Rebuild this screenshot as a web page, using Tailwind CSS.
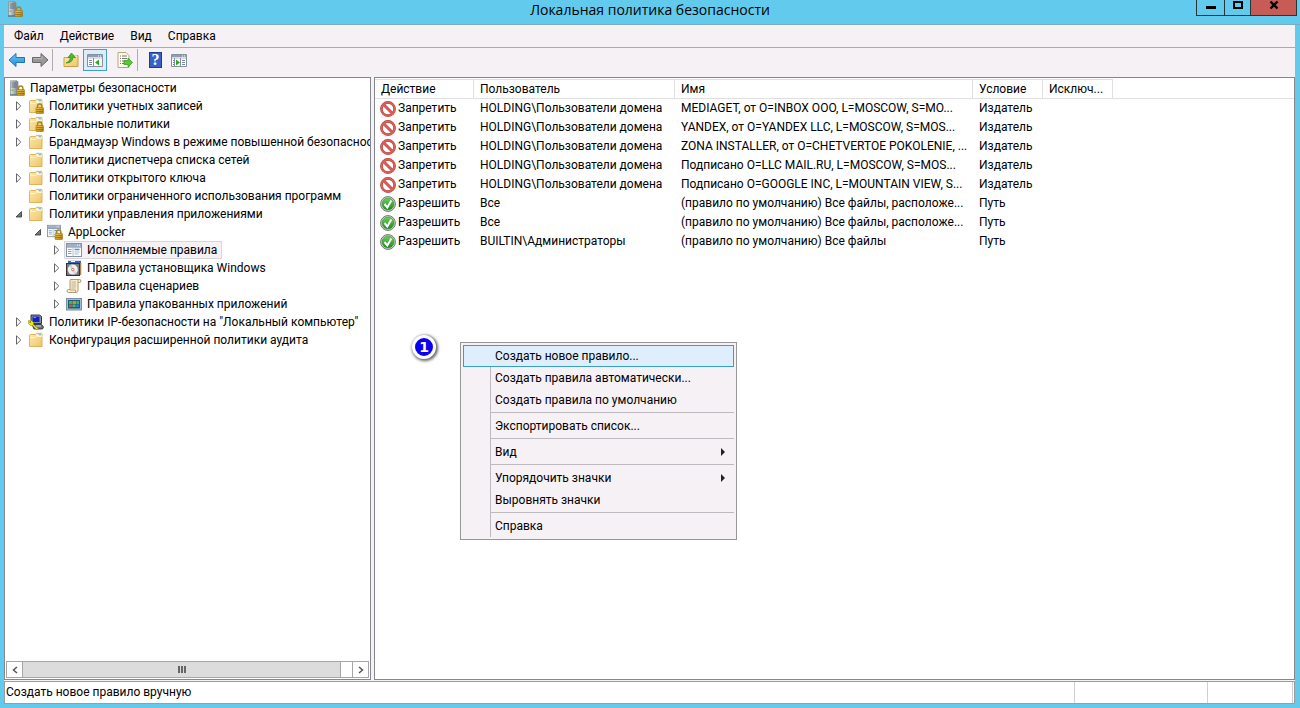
<!DOCTYPE html>
<html lang="ru">
<head>
<meta charset="utf-8">
<meta name="viewport" content="width=device-width, initial-scale=1">
<title>Локальная политика безопасности</title>
<script src="https://cdn.jsdelivr.net/npm/@tailwindcss/browser@4"></script>
</head>
<body class="flex h-screen flex-col overflow-hidden bg-[#62caed] font-['Roboto','Noto_Sans',sans-serif] text-xs text-black">
<svg class="absolute size-0" aria-hidden="true">
  <defs>
    <linearGradient id="gf" x1="0" y1="0" x2="1" y2="1"><stop offset="0" stop-color="#fdeab0"/><stop offset="1" stop-color="#efc566"/></linearGradient>
    <linearGradient id="gl" x1="0" y1="0" x2="1" y2="1"><stop offset="0" stop-color="#f5cf50"/><stop offset="1" stop-color="#b07a0c"/></linearGradient>
    <linearGradient id="gs" x1="0" y1="0" x2="1" y2="0"><stop offset="0" stop-color="#dfe5ea"/><stop offset="1" stop-color="#77828c"/></linearGradient>
    <linearGradient id="gg" x1="0" y1="0" x2="0" y2="1"><stop offset="0" stop-color="#6fd05a"/><stop offset="1" stop-color="#1d8a1c"/></linearGradient>
    <linearGradient id="gb" x1="0" y1="0" x2="0" y2="1"><stop offset="0" stop-color="#6cc4f5"/><stop offset="1" stop-color="#1c8fe0"/></linearGradient>
  </defs>
  <symbol id="lock" viewBox="0 0 16 16"><path d="M9.500 10V8.200a2.200 2.200 0 0 1 4.400 0V10" fill="none" stroke="#a8842a" stroke-width="1.400"/><rect x="8" y="9.500" width="7.500" height="6" rx=".6" fill="url(#gl)" stroke="#9a6c10" stroke-width=".6"/><path d="M8.500 11.500h6.500M8.500 13.500h6.500" stroke="#8f640d" stroke-width=".7"/></symbol>
  <symbol id="server" viewBox="0 0 16 16"><path d="M1.500.8h6.500l1 1V15H1.500z" fill="url(#gs)" stroke="#7d8891" stroke-width=".7"/><path d="M2.500 3h5M2.500 5h5M2.500 7h5" stroke="#59656f" stroke-width=".9"/><rect x="2.500" y="9.500" width="2" height="1.500" fill="#6c3"/><path d="M1 15h8" stroke="#55606a"/><use href="#lock"/></symbol>
  <symbol id="folder" viewBox="0 0 16 16"><path d="M1.500 14.500v-11q0-1 1-1h5l1-1.200h4.500q1 0 1 1V14.500z" fill="url(#gf)" stroke="#d9ad55" stroke-width=".9"/><path d="M8.500 2.300h5v1.600h-5z" fill="#fff"/><path d="M10.500 2.300h2.500v1h-2.500z" fill="#5da9c9"/><path d="M2 5.500h5.500l1-1h5.500" fill="none" stroke="#fff6d2" stroke-width=".9"/></symbol>
  <symbol id="folderlock" viewBox="0 0 16 16"><use href="#folder"/><use href="#lock"/></symbol>
  <symbol id="win" viewBox="0 0 16 16"><rect x=".5" y="1.500" width="15" height="13" fill="#fbfdff" stroke="#8593a3"/><path d="M1 2h14v2.500H1z" fill="#9fb2c8"/><path d="M11 3.200h1m1 0h1" stroke="#fff"/><path d="M1 5h14" stroke="#708297"/><path d="M2 7.500h3.500m-3.500 2h3.500m-3.500 2h3.500" stroke="#93a2b4"/><path d="M7 5.500v9" stroke="#a4b0bd" stroke-width=".8"/><path d="M8.500 7.500h5" stroke="#4c93c8" stroke-width="1.500"/><path d="M8.500 10h5M8.500 12h4" stroke="#a9bccb"/></symbol>
  <symbol id="applock" viewBox="0 0 16 16"><use href="#win" width="14" height="14"/><use href="#lock"/></symbol>
  <symbol id="cd" viewBox="0 0 16 16"><path d="M2 .8h13v3H2z" fill="#425fb0"/><path d="M5 1.500h4" stroke="#fff"/><path d="M13.500 3h1.800v12h-1.800z" fill="#ab8250"/><rect x=".5" y="3.500" width="13" height="12" fill="#777d80" stroke="#333"/><circle cx="6.800" cy="9.600" r="5" fill="#eef1f2"/><path d="M6.800 9.600l-4-3a5 5 0 0 1 3-2z" fill="#b5e0da"/><path d="M6.800 9.600l4 3a5 5 0 0 1-3 2z" fill="#ddcfe6"/><circle cx="6.800" cy="9.600" r="1.200" fill="#fff" stroke="#d45f28" stroke-width=".9"/></symbol>
  <symbol id="scroll" viewBox="0 0 16 16"><path d="M4.500 1.500h9q1.500 0 1.500 1.500t-1.800 1.500H12v8q0 2-2 2H2.500q-1.500 0-1.500-1.500T2.500 11.500H4V3q0-1.500 1.500-1.500z" fill="#f7edcf" stroke="#a89468" stroke-width=".9"/><path d="M4 12h5.500v2.500M12 4.500V2" fill="none" stroke="#a89468" stroke-width=".8"/><path d="M5.500 4h4.500M5.500 6h4.500M5.500 8h4.500M5.500 10h4" stroke="#bba06a" stroke-width=".8"/></symbol>
  <symbol id="pack" viewBox="0 0 16 16"><rect x=".5" y="2.500" width="15" height="11.500" fill="#a9bbd0" stroke="#7b8ea6"/><rect x="2" y="4" width="12" height="8.500" fill="#17607c"/><path d="M3 5h3v3H3zM10.500 5h2.500v3h-2.500z" fill="#43b649"/><path d="M6.500 5h3.500v3H6.500z" fill="#e1862b"/><path d="M3 8.500h3v2.500H3z" fill="#d84c32"/><path d="M6.500 8.500h3v2.500h-3z" fill="#54bf51"/><path d="M10 8.500h3v2.500h-3z" fill="#3478d0"/></symbol>
  <symbol id="ipsec" viewBox="0 0 16 16"><path d="M3 1h8.500l2 1.500v7H4.500L3 8z" fill="#8b939c" stroke="#20252b" stroke-width=".9"/><path d="M4.500 2.500h7v5.500h-7z" fill="#1022c0"/><path d="M5.500 3.500h2.500" stroke="#7b8cff"/><path d="M4 10.500h9.500l2 2.500-1 2H6z" fill="#6d757f" stroke="#1c2025" stroke-width=".8"/><path d="M8 12h5" stroke="#d8dce0"/><path d="M.5 6.500h3l2 2v2l5 4.500-1.500 1-4.500-4.500H2.500L0 9z" fill="#f0e60a" stroke="#8c8500" stroke-width=".5"/><path d="M1.500 8h1.500" stroke="#443"/></symbol>
  <symbol id="deny" viewBox="0 0 16 16"><circle cx="8" cy="8" r="6.600" fill="#fff" stroke="#b3403b" stroke-width="2.600"/><path d="M3.500 3.500l9 9" stroke="#b3403b" stroke-width="2.800"/><circle cx="8" cy="8" r="6.600" fill="none" stroke="#dc5f58" stroke-width="1.600"/><path d="M3.400 3.400l9.200 9.200" stroke="#dc5f58" stroke-width="1.800"/></symbol>
  <symbol id="allow" viewBox="0 0 16 16"><circle cx="8" cy="8" r="7.400" fill="#d8dcd8" stroke="#6d746d" stroke-width="1"/><circle cx="8" cy="8" r="6" fill="url(#gg)" stroke="#2c8529" stroke-width=".5"/><path d="M4.500 8l2.800 3.400L11.300 4.500" fill="none" stroke="#fff" stroke-width="2"/></symbol>
  <symbol id="closed" viewBox="0 0 8 10"><path d="M1.500.8v8.400L5.800 5z" fill="#fff" stroke="#666"/></symbol>
  <symbol id="open" viewBox="0 0 8 10"><path d="M6.500 2.500v5.500H1z" fill="#777" stroke="#333" stroke-width=".8"/></symbol>
  <symbol id="console" viewBox="0 0 16 16"><path d="M.5 2.500h15v12H.5z" fill="#fff" stroke="#8391a3"/><path d="M1 3h14v2H1z" fill="#8b9cb3"/><path d="M11 4h1m1 0h1" stroke="#fff"/><path d="M1 6h14" stroke="#b1bccb"/></symbol>
</svg>

<header class="relative flex h-[25px] shrink-0 items-start border-b border-[#7fa9c4] px-[7px] pt-px">
  <svg class="size-4"><use href="#server"/></svg>
  <h1 class="absolute inset-x-0 top-0 text-center font-['Open_Sans','Noto_Sans',sans-serif] text-sm leading-5">Локальная политика безопасности</h1>
  <div class="absolute top-0 right-[3px] flex h-4 border border-t-0 border-[#29333a]">
    <button aria-label="Свернуть" class="flex w-7 justify-center border-r border-[#29333a]"><svg class="h-4 w-4"><path d="M3 7.500h10" stroke="#000" stroke-width="3"/></svg></button>
    <button aria-label="Развернуть" class="flex w-[26px] justify-center border-r border-[#29333a]"><svg class="h-4 w-4"><rect x="4" y="2" width="8" height="6" fill="none" stroke="#000" stroke-width="2"/></svg></button>
    <button aria-label="Закрыть" class="flex w-[45px] justify-center bg-[#c75b55]"><svg class="h-4 w-4"><path d="M4.500 1.500l7 7m0-7l-7 7" stroke="#000" stroke-width="2.400"/></svg></button>
  </div>
</header>

<div class="mr-[5px] mb-1 ml-1 flex min-h-0 flex-1 flex-col bg-[#f6f1f5]">
  <nav class="flex h-[23px] shrink-0 items-center border-b border-[#aba9ae] px-0.5">
    <button class="px-2">Файл</button><button class="px-2">Действие</button><button class="px-2">Вид</button><button class="px-2">Справка</button>
  </nav>
  <div class="flex h-[29px] shrink-0 items-center px-1 pb-1.5" role="toolbar">
    <button aria-label="Назад"><svg class="h-4 w-[18px]" viewBox="0 0 18 16"><path d="M1 8l7-6.500v4h8.500v5H8v4z" fill="url(#gb)" stroke="#2375b5"/></svg></button>
    <button aria-label="Вперёд" class="ml-[5px]"><svg class="h-4 w-[18px]" viewBox="0 0 18 16"><path d="M17 8l-7-6.500v4H1.500v5H10v4z" fill="#999" stroke="#686868"/><path d="M2.500 6.500h8.500v-2.500" fill="none" stroke="#bbb"/></svg></button>
    <i class="ml-[3px] h-[22px] w-px bg-[#b0adb2]"></i>
    <button aria-label="На уровень вверх" class="ml-2.5"><svg class="size-4" viewBox="0 0 16 16"><path d="M1 14.500v-9h6l1.500-2H15v11z" fill="url(#gf)" stroke="#cfa040"/><path d="M10 4h4" stroke="#fff"/><path d="M3 11q4-1 4.500-5.500H5L8.500 1l4 4.500H10Q9.500 11 3 11z" fill="#4db82e" stroke="#2f8a1b" stroke-width=".7"/></svg></button>
    <button aria-label="Дерево консоли" class="ml-1 flex h-[22px] w-6 items-center justify-center border border-[#3fa0cb] bg-[#dcecf8]"><svg class="size-4"><use href="#console"/><path d="M2 8.500h3m-3 2h3m-3 2h3" stroke="#7789a0"/><path d="M6.500 6v8" stroke="#8391a3"/><path d="M12 7.500v6L8 10.500z" fill="#38a51f"/></svg></button>
    <button aria-label="Экспортировать список" class="ml-2.5"><svg class="size-4" viewBox="0 0 16 16"><path d="M1 .5h8l3 3v12H1z" fill="#fffdf0" stroke="#b7a77d"/><path d="M3 4h1m1 0h5M3 6.500h1m1 0h5M3 9h1m1 0h2M3 11.500h1m1 0h2" stroke="#77746c"/><path d="M7 8.500h4V6l4.500 4.500L11 15v-2.500H7z" fill="#5ec53a" stroke="#35911f" stroke-width=".7"/></svg></button>
    <i class="ml-1 h-[22px] w-px bg-[#b0adb2]"></i>
    <button aria-label="Справка" class="ml-[11px] flex h-4 w-[13px] items-center justify-center border border-[#223a8a] bg-[#3c5fc4] font-['Liberation_Serif',serif] text-base leading-none font-bold text-white">?</button>
    <button aria-label="Панель действий" class="ml-[9px]"><svg class="size-4"><use href="#console"/><path d="M11 8.500h3m-3 2h3m-3 2h3M2 8.500h1m-1 2h1m-1 2h1" stroke="#7789a0"/><path d="M9.500 6v8M3.500 6v8" stroke="#8391a3"/><path d="M5 7.500v6l4-3z" fill="#38a51f"/></svg></button>
  </div>

  <main class="flex min-h-0 flex-1 gap-[3px]">
    <section class="flex w-[367px] shrink-0 flex-col border border-[#858790] bg-white" aria-label="Дерево консоли">
      <ul class="min-h-0 flex-1 overflow-hidden pt-px whitespace-nowrap [&_li]:flex [&_li]:h-[18px] [&_li]:items-center [&_li>svg]:mr-[3px] [&_li>svg]:h-2.5 [&_li>svg]:w-2 [&_li>svg]:shrink-0 [&_span]:flex [&_span]:h-[18px] [&_span]:items-center [&_span]:gap-[5px] [&_span]:border [&_span]:px-px [&_span]:pr-1 [&_span_svg]:size-4 [&_span_svg]:shrink-0">
        <li class="pl-[2px]"><span class="border-transparent"><svg><use href="#server"/></svg>Параметры безопасности</span></li>
        <li class="pl-2.5"><svg><use href="#closed"/></svg><span class="border-transparent"><svg><use href="#folderlock"/></svg>Политики учетных записей</span></li>
        <li class="pl-2.5"><svg><use href="#closed"/></svg><span class="border-transparent"><svg><use href="#folderlock"/></svg>Локальные политики</span></li>
        <li class="pl-2.5"><svg><use href="#closed"/></svg><span class="border-transparent"><svg><use href="#folder"/></svg>Брандмауэр Windows в режиме повышенной безопасности</span></li>
        <li class="pl-2.5"><svg></svg><span class="border-transparent"><svg><use href="#folder"/></svg>Политики диспетчера списка сетей</span></li>
        <li class="pl-2.5"><svg><use href="#closed"/></svg><span class="border-transparent"><svg><use href="#folder"/></svg>Политики открытого ключа</span></li>
        <li class="pl-2.5"><svg></svg><span class="border-transparent"><svg><use href="#folder"/></svg>Политики ограниченного использования программ</span></li>
        <li class="pl-2.5"><svg><use href="#open"/></svg><span class="border-transparent"><svg><use href="#folder"/></svg>Политики управления приложениями</span></li>
        <li class="pl-[29px]"><svg><use href="#open"/></svg><span class="border-transparent"><svg><use href="#applock"/></svg>AppLocker</span></li>
        <li class="pl-12"><svg><use href="#closed"/></svg><span class="border-[#d9d6da] bg-[#f6f1f5]"><svg><use href="#win"/></svg>Исполняемые правила</span></li>
        <li class="pl-12"><svg><use href="#closed"/></svg><span class="border-transparent"><svg><use href="#cd"/></svg>Правила установщика Windows</span></li>
        <li class="pl-12"><svg><use href="#closed"/></svg><span class="border-transparent"><svg><use href="#scroll"/></svg>Правила сценариев</span></li>
        <li class="pl-12"><svg><use href="#closed"/></svg><span class="border-transparent"><svg><use href="#pack"/></svg>Правила упакованных приложений</span></li>
        <li class="pl-2.5"><svg><use href="#closed"/></svg><span class="border-transparent"><svg><use href="#ipsec"/></svg>Политики IP-безопасности на "Локальный компьютер"</span></li>
        <li class="pl-2.5"><svg><use href="#closed"/></svg><span class="border-transparent"><svg><use href="#folder"/></svg>Конфигурация расширенной политики аудита</span></li>
      </ul>
      <div class="mx-px mb-px flex h-[17px] shrink-0 border border-[#a6a6a6]">
        <button aria-label="Прокрутить влево" class="flex w-4 items-center justify-center border-r border-[#a6a6a6]"><svg class="size-2"><path d="M6 1L2.500 4 6 7" fill="none" stroke="#555" stroke-width="1.500"/></svg></button>
        <div class="flex flex-1 items-center justify-center gap-px border-r border-[#a6a6a6] bg-[#dcdcdc]"><i class="h-[7px] w-0.5 bg-[#666]"></i><i class="h-[7px] w-0.5 bg-[#666]"></i><i class="h-[7px] w-0.5 bg-[#666]"></i></div>
        <div class="w-[11px]"></div>
        <button aria-label="Прокрутить вправо" class="flex w-4 items-center justify-center border-l border-[#a6a6a6]"><svg class="size-2"><path d="M2 1l3.500 3L2 7" fill="none" stroke="#555" stroke-width="1.500"/></svg></button>
      </div>
    </section>

    <section class="min-w-0 flex-1 overflow-hidden border border-[#858790] bg-white pt-px" aria-label="Правила">
      <table class="w-full table-fixed border-separate border-spacing-0 text-left whitespace-nowrap [&_td]:h-[19px] [&_td]:py-0 [&_td]:pr-0 [&_td]:pl-1.5 [&_td]:leading-[19px] [&_th]:h-[19px] [&_th]:border-b [&_th]:border-[#e0e0e0] [&_th]:px-1.5 [&_th]:leading-[18px] [&_th]:font-normal">
        <colgroup><col class="w-[99px]"><col class="w-[201px]"><col class="w-[298px]"><col class="w-[70px]"><col class="w-[70px]"><col></colgroup>
        <thead><tr><th class="border-t border-r">Действие</th><th class="border-t border-r">Пользователь</th><th class="border-t border-r">Имя</th><th class="border-t border-r">Условие</th><th class="border-t border-r">Исключ...</th><td class="border-b border-[#e0e0e0]"></td></tr></thead>
        <tbody>
          <tr><td><div class="-ml-px flex items-center gap-0.5"><svg class="size-4 shrink-0"><use href="#deny"/></svg>Запретить</div></td><td>HOLDING\Пользователи домена</td><td>MEDIAGET, от O=INBOX OOO, L=MOSCOW, S=MO...</td><td>Издатель</td><td></td><td></td></tr>
          <tr><td><div class="-ml-px flex items-center gap-0.5"><svg class="size-4 shrink-0"><use href="#deny"/></svg>Запретить</div></td><td>HOLDING\Пользователи домена</td><td>YANDEX, от O=YANDEX LLC, L=MOSCOW, S=MOS...</td><td>Издатель</td><td></td><td></td></tr>
          <tr><td><div class="-ml-px flex items-center gap-0.5"><svg class="size-4 shrink-0"><use href="#deny"/></svg>Запретить</div></td><td>HOLDING\Пользователи домена</td><td>ZONA INSTALLER, от O=CHETVERTOE POKOLENIE, ...</td><td>Издатель</td><td></td><td></td></tr>
          <tr><td><div class="-ml-px flex items-center gap-0.5"><svg class="size-4 shrink-0"><use href="#deny"/></svg>Запретить</div></td><td>HOLDING\Пользователи домена</td><td>Подписано O=LLC MAIL.RU, L=MOSCOW, S=MOS...</td><td>Издатель</td><td></td><td></td></tr>
          <tr><td><div class="-ml-px flex items-center gap-0.5"><svg class="size-4 shrink-0"><use href="#deny"/></svg>Запретить</div></td><td>HOLDING\Пользователи домена</td><td>Подписано O=GOOGLE INC, L=MOUNTAIN VIEW, S...</td><td>Издатель</td><td></td><td></td></tr>
          <tr><td><div class="-ml-px flex items-center gap-0.5"><svg class="size-4 shrink-0"><use href="#allow"/></svg>Разрешить</div></td><td>Все</td><td>(правило по умолчанию) Все файлы, расположе...</td><td>Путь</td><td></td><td></td></tr>
          <tr><td><div class="-ml-px flex items-center gap-0.5"><svg class="size-4 shrink-0"><use href="#allow"/></svg>Разрешить</div></td><td>Все</td><td>(правило по умолчанию) Все файлы, расположе...</td><td>Путь</td><td></td><td></td></tr>
          <tr><td><div class="-ml-px flex items-center gap-0.5"><svg class="size-4 shrink-0"><use href="#allow"/></svg>Разрешить</div></td><td>BUILTIN\Администраторы</td><td>(правило по умолчанию) Все файлы</td><td>Путь</td><td></td><td></td></tr>
        </tbody>
      </table>
    </section>
  </main>

  <footer class="mt-px flex h-[23px] shrink-0 border border-[#9a9ca4] bg-white pr-px">
    <p class="flex-1 px-px leading-[21px]">Создать новое правило вручную</p>
    <div class="w-[133px] border-l border-[#d0d0d0]"></div>
    <div class="w-[86px] border-x border-[#d0d0d0]"></div>
  </footer>
</div>

<div class="absolute top-[335px] left-[412px] flex size-6 items-center justify-center rounded-full border-[3px] border-white bg-[#0a00f0] font-['DejaVu_Sans',sans-serif] text-sm font-bold text-white shadow-[1px_1px_3px_1px_rgba(0,0,0,0.6)]">1</div>

<div role="menu" class="absolute top-[342px] left-[460px] w-[277px] border border-[#979797] bg-[#f6f1f5] p-0.5 [&_button]:flex [&_button]:h-[22px] [&_button]:w-full [&_button]:items-center [&_button]:justify-between [&_button]:border [&_button]:pr-2 [&_hr]:mt-px [&_hr]:mb-0.5 [&_hr]:border-[#bdb9be]">
  <button role="menuitem" class="border-[#379fc8] bg-[#dfeefd] pl-[31px]">Создать новое правило...</button>
  <div class="ml-[27px] border-l border-[#bdb9be] [&_button]:border-transparent [&_button]:pl-[3px]">
    <button role="menuitem">Создать правила автоматически...</button>
    <button role="menuitem">Создать правила по умолчанию</button>
    <hr>
    <button role="menuitem">Экспортировать список...</button>
    <hr>
    <button role="menuitem">Вид<svg class="h-2 w-1"><path d="M0 0l4 4-4 4z" fill="#222"/></svg></button>
    <hr>
    <button role="menuitem">Упорядочить значки<svg class="h-2 w-1"><path d="M0 0l4 4-4 4z" fill="#222"/></svg></button>
    <button role="menuitem">Выровнять значки</button>
    <hr>
    <button role="menuitem">Справка</button>
  </div>
</div>
</body>
</html>
